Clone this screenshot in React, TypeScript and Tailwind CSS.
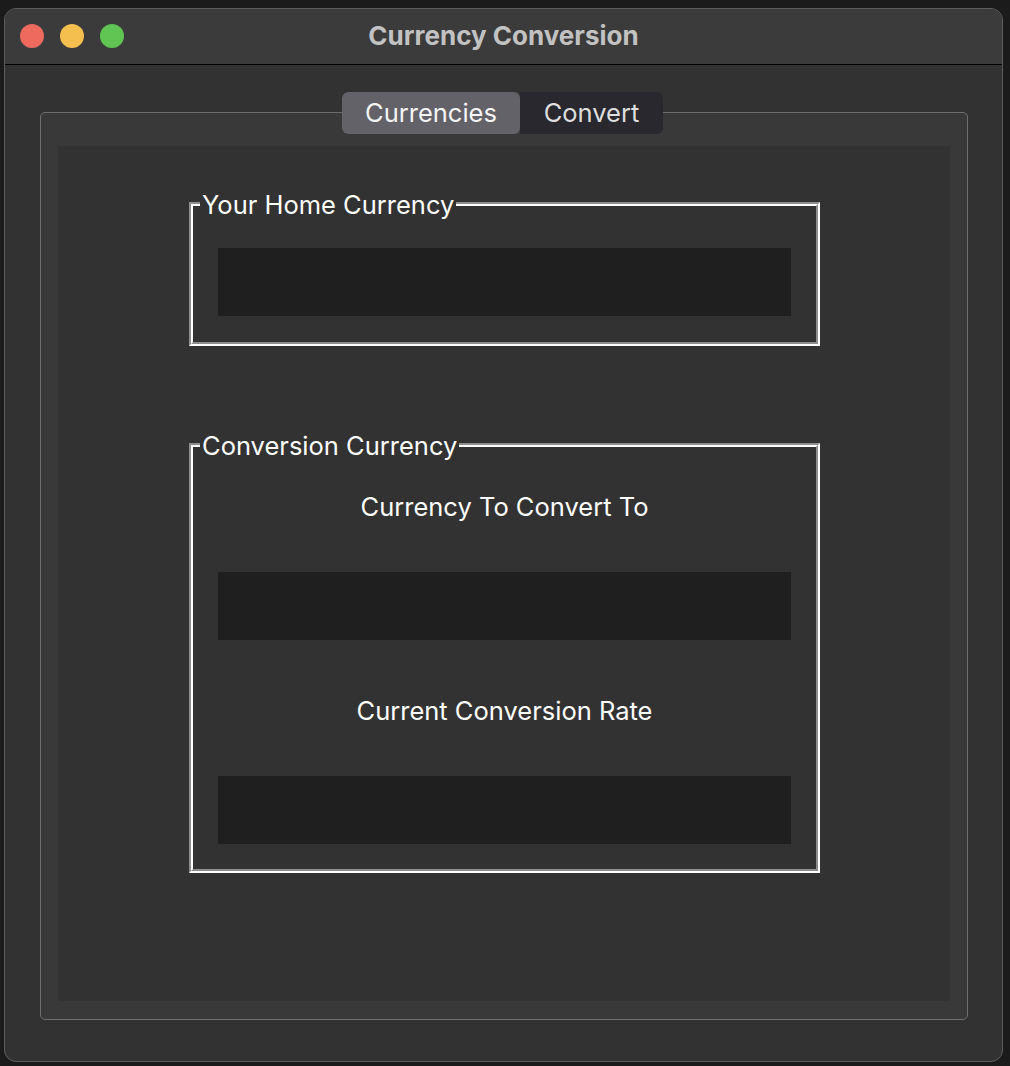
import React from "react";

const font = { fontFamily: "Inter, 'Noto Sans', 'Liberation Sans', sans-serif" };

function GroupBox({ title, className, children }: { title: string; className?: string; children?: React.ReactNode }) {
  return (
    <div className={`relative border-2 border-t-[#8e8e8e] border-l-[#8e8e8e] border-r-white border-b-white ${className ?? ""}`}>
      <div className="h-full w-full border-2 border-t-white border-l-white border-r-[#8e8e8e] border-b-[#8e8e8e]">
        {children}
      </div>
      <div className="absolute left-[9px] top-[-14px] bg-[#323232] px-[2px] text-[25.5px] leading-[30px] text-white">
        {title}
      </div>
    </div>
  );
}

function Entry({ className }: { className?: string }) {
  return <div className={`h-[68px] bg-[#1f1f1f] ${className ?? ""}`} />;
}

export default function App() {
  return (
    <div className="w-[1010px] h-[1066px] bg-[#1b1b1b] pl-[4px] pt-[8px] overflow-hidden" style={font}>
      <div className="w-[999px] h-[1054px] rounded-[12px] overflow-hidden border border-[#5d5d5d] bg-[#323232] flex flex-col">
        <div className="relative h-[56px] shrink-0 bg-[#3b3b3b] border-b border-black flex items-center">
          <div className="flex gap-[16px] pl-[15px] pb-[1px]">
            <div className="w-[24px] h-[24px] rounded-full bg-[#ee6a5f]" />
            <div className="w-[24px] h-[24px] rounded-full bg-[#f5bf4f]" />
            <div className="w-[24px] h-[24px] rounded-full bg-[#61c554]" />
          </div>
          <div className="absolute inset-0 pb-[2px] flex items-center justify-center text-[26px] font-bold text-[#c2c2c2]">
            Currency Conversion
          </div>
        </div>
        <div className="flex-1 pl-[35px] pt-[47px]">
          <div className="relative w-[928px] h-[908px] rounded-[5px] border border-[#6e6e6e] bg-[#393939] pt-[33px] px-[17px]">
            <div className="absolute left-[301px] top-[-21px] flex h-[42px] rounded-[6px] overflow-hidden text-[25.5px]">
              <div className="w-[178px] bg-[#636268] flex items-center justify-center text-[#f4f4f4] rounded-[6px]">
                Currencies
              </div>
              <div className="w-[143px] bg-[#29282e] flex items-center justify-center text-[#dedede]">
                Convert
              </div>
            </div>
            <div className="h-[855px] bg-[#323232] pt-[56px] pl-[131px]">
              <GroupBox title="Your Home Currency" className="w-[631px] h-[144px]">
                <div className="pt-[42px] px-[25px]">
                  <Entry />
                </div>
              </GroupBox>
              <GroupBox title="Conversion Currency" className="mt-[97px] w-[631px] h-[430px]">
                <div className="px-[25px] pt-[45px] flex flex-col text-white text-[25.5px]">
                  <div className="text-center leading-[30px]">Currency To Convert To</div>
                  <Entry className="mt-[50px]" />
                  <div className="mt-[56px] text-center leading-[30px]">Current Conversion Rate</div>
                  <Entry className="mt-[50px]" />
                </div>
              </GroupBox>
            </div>
          </div>
        </div>
      </div>
    </div>
  );
}
